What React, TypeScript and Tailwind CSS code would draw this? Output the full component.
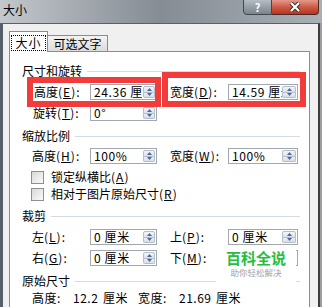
import * as React from 'react';

function Spin({ w }: { w: string }) {
  return (
    <div className={`flex flex-col self-stretch my-[1px] mr-[1px] ${w}`}>
      <div className="flex-1 flex items-center justify-center border border-[#b4bdc8] bg-gradient-to-b from-[#f4f6f9] to-[#dce2ea] rounded-t-[2px]">
        <svg width="5" height="3" viewBox="0 0 5 3"><path d="M0 3 L2.5 0 L5 3 Z" fill="#4a6a9e" /></svg>
      </div>
      <div className="flex-1 flex items-center justify-center border border-t-0 border-[#b4bdc8] bg-gradient-to-b from-[#eef1f5] to-[#d6dde6] rounded-b-[2px]">
        <svg width="5" height="3" viewBox="0 0 5 3"><path d="M0 0 L2.5 3 L5 0 Z" fill="#4a6a9e" /></svg>
      </div>
    </div>
  );
}

function Field({ value, wide }: { value: string; wide?: boolean }) {
  return (
    <div className={`h-[16px] border border-[#a2a8b0] bg-white flex items-center shrink-0 ${wide ? 'w-[70px]' : 'w-[67px]'}`}>
      <span className="flex-1 pl-[3px] overflow-hidden whitespace-nowrap leading-[14px] tracking-[0.6px]">{value}</span>
      <Spin w={wide ? 'w-[14px]' : 'w-[12px]'} />
    </div>
  );
}

function Label({ text, k, className = '' }: { text: string; k: string; className?: string }) {
  return (
    <span className={`w-[58px] shrink-0 whitespace-nowrap ${className}`}>
      {text}
      <span className="tracking-[1px]">(<span className="underline">{k}</span>):</span>
    </span>
  );
}

function Section({ title, className }: { title: string; className: string }) {
  return (
    <div className={`flex items-center h-[14px] ${className}`}>
      <span className="whitespace-nowrap">{title}</span>
      <div className="flex-1 h-px bg-[#d3dce3] ml-[5px]" />
    </div>
  );
}

function Check({ text, k, className }: { text: string; k: string; className: string }) {
  return (
    <div className={`flex items-center h-[14px] pl-[9px] ${className}`}>
      <div className="w-[13px] h-[13px] border border-[#8e8f8f] bg-gradient-to-br from-[#d8d8d8] to-[#fafafa]" />
      <span className="ml-[7px] whitespace-nowrap">
        {text}
        <span className="tracking-[1px]">(<span className="underline">{k}</span>)</span>
      </span>
    </div>
  );
}

export default function App() {
  return (
    <div className="w-[322px] h-[307px] overflow-hidden relative bg-gradient-to-r from-[#c3c8cd] via-[#858c93] to-[#a9afb5] font-['Noto_Sans_CJK_SC',sans-serif] text-[12px] leading-[14px] text-black">
      {/* title bar */}
      <div className="h-[23px] flex items-start">
        <span className="pl-[3px] pt-[3px] text-[12px]">大小</span>
        <div className="ml-auto mr-[3px] flex">
          <div className="w-[29px] h-[16px] -mt-px border border-[#3f464d] rounded-bl-[4px] bg-gradient-to-b from-[#b5bcc3] to-[#7b838b] flex items-center justify-center text-white font-bold text-[11px]">?</div>
          <div className="w-[47px] h-[16px] -mt-px border border-l-0 border-[#4a2a25] rounded-br-[4px] bg-gradient-to-b from-[#e3998a] via-[#cf5a45] to-[#b8321f] flex items-center justify-center">
            <svg width="12" height="10" viewBox="0 0 12 10">
              <path d="M2 1 L10 9 M10 1 L2 9" stroke="#3a2a2a" strokeWidth="4" />
              <path d="M2 1 L10 9 M10 1 L2 9" stroke="#ffffff" strokeWidth="2.2" />
            </svg>
          </div>
        </div>
      </div>

      {/* body */}
      <div className="flex h-[284px]">
        <div className="w-[3px] bg-[#55606a]" />
        <div className="w-[317px] bg-[#f0f0f0] border-t border-[#5b6066] border-r-2 border-r-[#3c3c3c] pl-[6px] pt-[7px]">
          <div className="flex items-end h-[21px] relative z-10 -mb-px">
            <div className="w-[39px] h-[21px] border border-b-0 border-[#898c95] bg-white flex items-start justify-center pt-[3px]">
              <span className="border border-dotted border-black px-[3px] leading-[14px] h-[16px] tracking-[1px]">大小</span>
            </div>
            <div className="w-[60px] h-[17px] border border-l-0 border-[#898c95] bg-gradient-to-b from-[#f3f3f3] to-[#dcdcdc] flex items-center justify-center">
              可选文字
            </div>
          </div>
          <div className="w-[301px] h-[300px] border border-[#898c95] bg-white pl-[12px] pr-[9px]">
            <Section title="尺寸和旋转" className="mt-[12px]" />
            <div className="flex items-center h-[16px] pl-[10px] mt-[6px]">
              <Label text="高度" k="E" className="pl-[2px]" />
              <Field value="24.36 厘米" />
              <Label text="宽度" k="D" className="ml-[13px]" />
              <Field value="14.59 厘米" wide />
            </div>
            <div className="flex items-center h-[16px] pl-[10px] mt-[5px]">
              <Label text="旋转" k="T" className="pl-[1px]" />
              <Field value="0°" />
            </div>

            <Section title="缩放比例" className="mt-[8px]" />
            <div className="flex items-center h-[16px] pl-[10px] mt-[5px]">
              <Label text="高度" k="H" />
              <Field value="100%" />
              <Label text="宽度" k="W" className="ml-[13px]" />
              <Field value="100%" wide />
            </div>
            <Check text="锁定纵横比" k="A" className="mt-[6px]" />
            <Check text="相对于图片原始尺寸" k="R" className="mt-[3px]" />

            <Section title="裁剪" className="mt-[8px]" />
            <div className="flex items-center h-[16px] pl-[10px] mt-[6px]">
              <Label text="左" k="L" />
              <Field value="0 厘米" />
              <Label text="上" k="P" className="ml-[13px]" />
              <Field value="0 厘米" wide />
            </div>
            <div className="flex items-center h-[16px] pl-[10px] mt-[5px]">
              <Label text="右" k="G" />
              <Field value="0 厘米" />
              <Label text="下" k="M" className="ml-[13px]" />
              <Field value="0 厘米" wide />
            </div>

            <Section title="原始尺寸" className="mt-[8px]" />
            <div className="flex items-center h-[14px] pl-[10px] mt-[3px] whitespace-nowrap tracking-[0.5px]">
              <span className="w-[41px] shrink-0">高度:</span>
              <span className="w-[30px] shrink-0">12.2</span>
              <span className="w-[35px] shrink-0">厘米</span>
              <span className="w-[41px] shrink-0">宽度:</span>
              <span className="w-[37px] shrink-0">21.69</span>
              <span>厘米</span>
            </div>
          </div>
        </div>
        <div className="flex-1 bg-[#989ea4]" />
      </div>

      {/* red annotation boxes */}
      <div className="absolute left-[27px] top-[77px] w-[134px] h-[30px] border-[6px] border-[#f23c3c]" />
      <div className="absolute left-[162px] top-[72px] w-[144px] h-[35px] border-[6px] border-[#f23c3c]" />

      {/* watermark */}
      <div className="absolute left-[216px] top-[246px] w-[80px] h-[41px] bg-white flex flex-col items-center">
        <span className="mt-[3px] text-[15px] leading-[17px] font-bold text-[#27bd3e]">百科全说</span>
        <span className="mt-[1px] text-[8.5px] leading-[11px] text-[#a3a3a3]">助你轻松解决</span>
      </div>
    </div>
  );
}
